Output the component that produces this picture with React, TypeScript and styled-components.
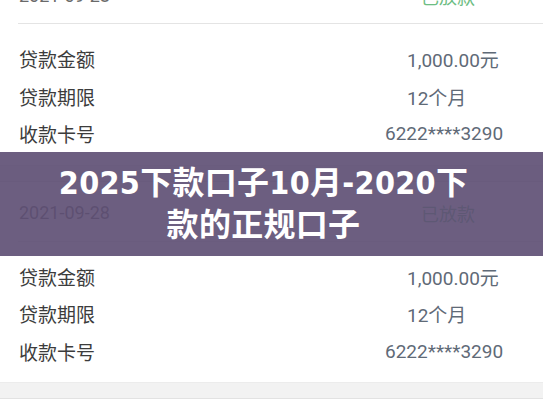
import * as React from 'react'
import styled, { createGlobalStyle } from 'styled-components'

const GlobalStyle = createGlobalStyle`
  html, body {
    margin: 0;
    padding: 0;
    background: #ffffff;
    overflow: hidden;
  }
  body {
    font-family: Roboto, "Noto Sans CJK SC", sans-serif;
  }
`

const Page = styled.div`
  position: relative;
  width: 543px;
  height: 408px;
  overflow: hidden;
  background: #ffffff;
`

const List = styled.div`
  display: flex;
  flex-direction: column;
  margin-top: -36px;
`

const Card = styled.section`
  background: #ffffff;
  padding-left: 18px;
  padding-bottom: 12px;
`

const Header = styled.div`
  display: flex;
  align-items: center;
  justify-content: space-between;
  height: 60px;
  padding: 20px 68px 16px 1px;
  box-sizing: border-box;
  border-bottom: 1px solid #e4e4e4;
`

const DateText = styled.span`
  font-size: 18px;
  line-height: 24px;
  color: #6a6a6a;
`

const Status = styled.span`
  font-family: "Noto Sans CJK SC", sans-serif;
  font-size: 18px;
  line-height: 24px;
  color: #6dbd83;
`

const Rows = styled.div`
  display: flex;
  flex-direction: column;
  padding-top: 16px;
`

const Row = styled.div`
  display: grid;
  grid-template-columns: 389px 1fr;
  align-items: center;
  height: 37.5px;
`

const Label = styled.span`
  font-family: "Noto Sans CJK SC", sans-serif;
  font-size: 19px;
  color: #3c3c3c;
  padding-left: 1px;
`

const Value = styled.span<{ $shift?: number }>`
  font-size: 19px;
  color: #5f6a77;
  margin-left: ${props => props.$shift || 0}px;
  white-space: nowrap;
`

const Gap = styled.div`
  height: 15px;
  background: #f2f2f2;
  border-top: 1px solid #ececec;
  border-bottom: 1px solid #e2e2e2;
`

const Overlay = styled.div`
  position: absolute;
  left: 0;
  right: 0;
  top: 152px;
  height: 104px;
  padding-right: 16px;
  box-sizing: border-box;
  background: rgba(92, 76, 114, 0.9);
  display: flex;
  align-items: center;
  justify-content: center;
`

const Title = styled.h1`
  margin: 0;
  width: 440px;
  text-align: center;
  font-family: "DejaVu Sans Condensed", "DejaVu Sans", "Noto Sans CJK SC", sans-serif;
  font-weight: 700;
  font-size: 32px;
  line-height: 42px;
  color: #ffffff;
  letter-spacing: 0.3px;
`

const loans = [
  { date: '2021-09-28', status: '已放款' },
  { date: '2021-09-28', status: '已放款' },
]

const LoanCard = ({ date, status }: { date: string; status: string }) => (
  <Card>
    <Header>
      <DateText>{date}</DateText>
      <Status>{status}</Status>
    </Header>
    <Rows>
      <Row>
        <Label>贷款金额</Label>
        <Value>1,000.00元</Value>
      </Row>
      <Row>
        <Label>贷款期限</Label>
        <Value>12个月</Value>
      </Row>
      <Row>
        <Label>收款卡号</Label>
        <Value $shift={-22}>6222****3290</Value>
      </Row>
    </Rows>
  </Card>
)

export default function App() {
  return (
    <Page>
      <GlobalStyle />
      <List>
        {loans.map((loan, i) => (
          <React.Fragment key={i}>
            <LoanCard date={loan.date} status={loan.status} />
            <Gap />
          </React.Fragment>
        ))}
      </List>
      <Overlay>
        <Title>2025下款口子10月-2020下款的正规口子</Title>
      </Overlay>
    </Page>
  )
}
